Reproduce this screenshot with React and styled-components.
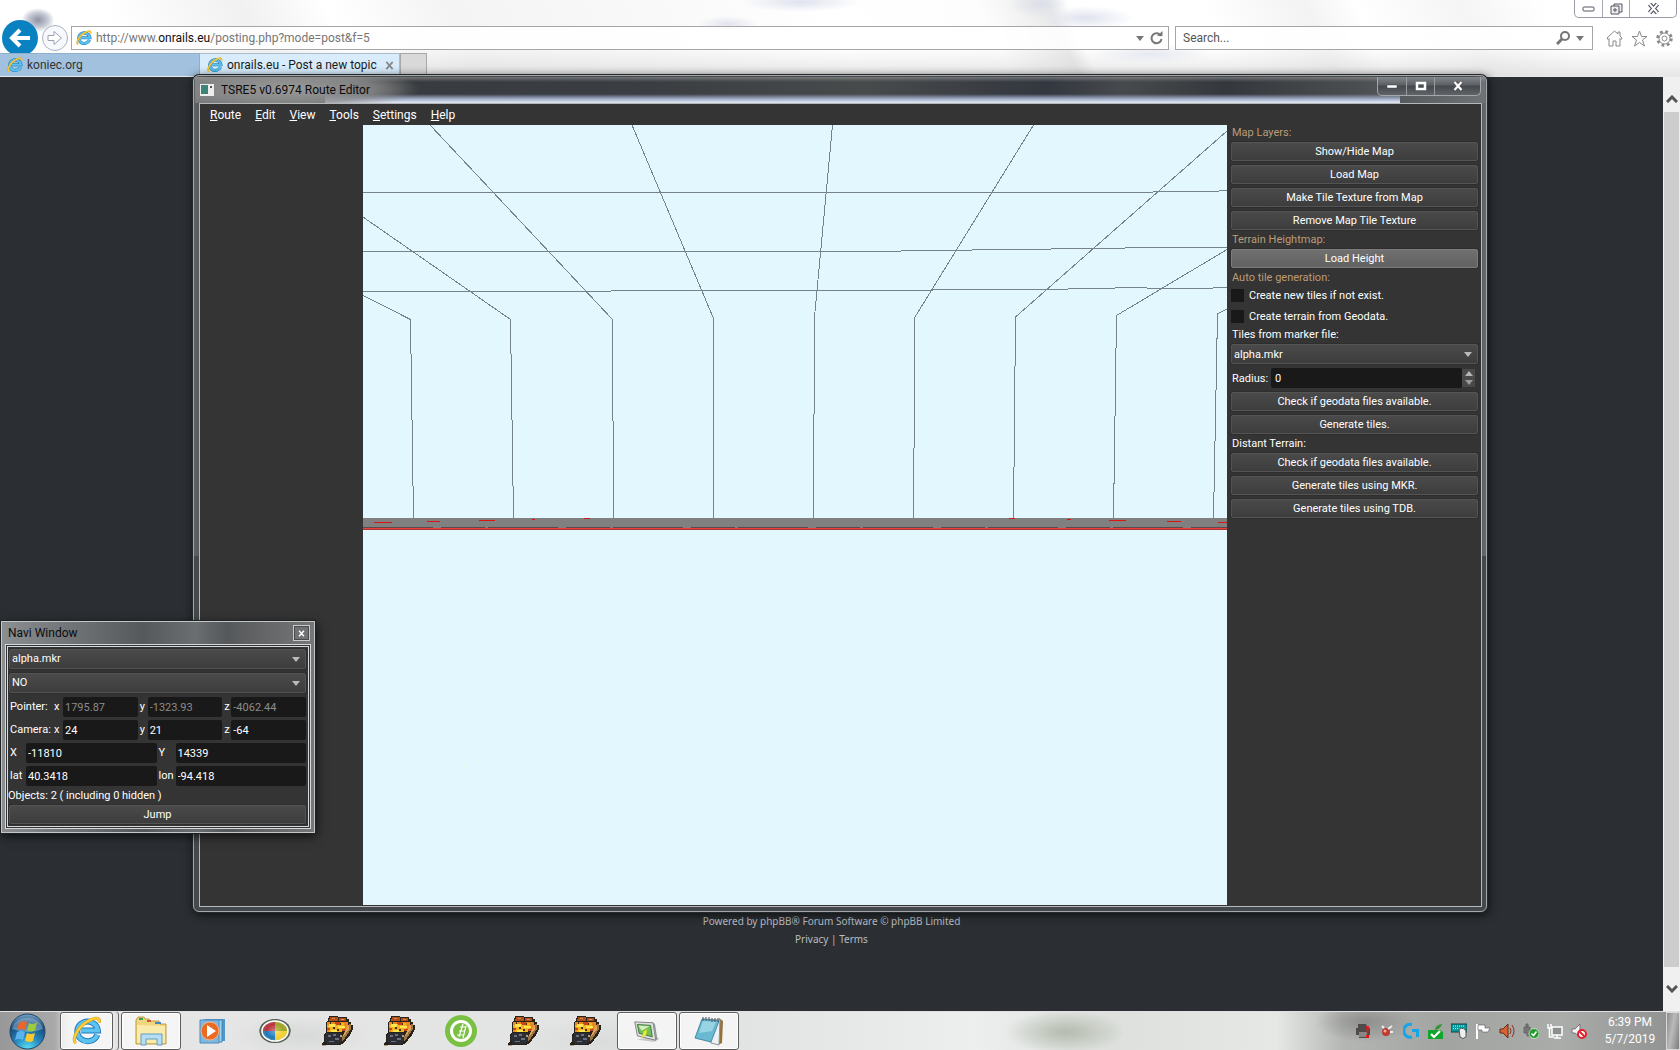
import React from 'react';
import styled, { createGlobalStyle, css } from 'styled-components';

const GlobalStyle = createGlobalStyle`
  *, *::before, *::after { box-sizing: border-box; }
  html, body, #root { height: 100%; margin: 0; }
  body { overflow: hidden; background: #2b2f33; }
  button, input, select { font: inherit; color: inherit; margin: 0; padding: 0; border: 0; border-radius: 0; background: none; outline: 0; }
  svg { display: block; flex: none; }
`;

const ui = "Roboto, 'Open Sans', sans-serif";
const web = "'Noto Sans', 'Open Sans', sans-serif";
const widget = "Roboto, 'Noto Sans', sans-serif";

/* ---------- desktop and browser ---------- */

const Desktop = styled.div`
  position: relative;
  display: flex;
  flex-direction: column;
  height: 100vh;
  overflow: hidden;
  font: 12px/16px ${ui};
`;

const BrowserTop = styled.header`
  display: flex;
  flex-direction: column;
  height: 77px;
  flex: none;
  border-bottom: 1px solid #e8e8e8;
  background:
    radial-gradient(22px 16px at 38px 20px, #8d93a4 0, rgba(160, 165, 185, 0.6) 45%, transparent 75%),
    radial-gradient(60px 10px at 800px 2px, #dfe2ee, transparent),
    radial-gradient(30px 8px at 728px 24px, #e2e4ee, transparent),
    radial-gradient(30px 14px at 1040px 4px, #dcdfe8, transparent),
    radial-gradient(50px 12px at 1085px 18px, #dfe3ee, transparent),
    radial-gradient(60px 10px at 1150px 54px, #e6e9f1, transparent),
    linear-gradient(180deg, transparent 48px, rgba(205, 205, 205, 0.5) 77px),
    linear-gradient(65deg, #fff 8%, #f1f1f1 16%, #fff 21%, #f4f4f4 28%, #fafafa 42%, #fff 50%, #fdfdfd 59%, #e9e9e9 63%, #fff 64%, #fff 72%, #f3f3f3 78%, #fff 81%, #f5f5f5 87%, #fff 92%);
`;

const CaptionRow = styled.div`
  display: flex;
  flex: none;
  justify-content: flex-end;
  height: 26px;
  padding-right: 3px;
`;

const CaptionGroup = styled.div`
  display: flex;
  height: 18px;
  border: 1px solid #9a9aa4;
  border-top: 0;
  border-radius: 0 0 5px 5px;
  background: rgba(255, 255, 255, 0.7);
`;

const CaptionButton = styled.button`
  display: grid;
  place-items: center;
  width: ${(p) => (p.$wide ? 47 : 27)}px;
  & + & { border-left: 1px solid #a8a8b0; }
`;

const NavRow = styled.div`
  display: flex;
  flex: none;
  align-items: center;
  height: 24px;
  padding: 0 7px 0 2px;
`;

const BackButton = styled.button`
  display: grid;
  place-items: center;
  width: 36px;
  height: 36px;
  border-radius: 50%;
  background: #0a82c2;
`;

const ForwardButton = styled.button`
  display: grid;
  place-items: center;
  width: 26px;
  height: 26px;
  margin: 0 3px 0 4px;
  border: 1px solid #a9b3c4;
  border-radius: 50%;
  background: rgba(245, 247, 252, 0.7);
`;

const AddressBox = styled.div`
  display: flex;
  align-items: center;
  gap: 4px;
  flex: 1;
  height: 24px;
  padding: 0 2px 0 4px;
  border: 1px solid #a6a6a8;
  background: rgba(255, 255, 255, 0.85);
`;

const AddressText = styled.a`
  flex: 1;
  color: #767676;
  text-decoration: none;
  b { font-weight: 400; color: #111; }
`;

const SearchBox = styled.label`
  display: flex;
  align-items: center;
  gap: 5px;
  width: 418px;
  height: 24px;
  margin-left: 6px;
  padding: 0 8px 0 7px;
  border: 1px solid #a6a6a8;
  background: rgba(255, 255, 255, 0.85);
  input { flex: 1; min-width: 0; color: #555; }
  input::placeholder { color: #555; opacity: 1; }
`;

const PlainButton = styled.button`
  display: grid;
  place-items: center;
`;

const ToolIcons = styled.div`
  display: flex;
  gap: 8px;
  margin-left: 13px;
`;

const TabRow = styled.div`
  display: flex;
  flex: 1;
  min-height: 0;
  margin-top: 3px;
`;

const Tab = styled.div`
  display: flex;
  align-items: center;
  gap: 4px;
  width: 200px;
  padding-left: 7px;
  border: 1px solid ${(p) => (p.$active ? '#a9bccb' : '#8fb0cc')};
  border-width: 1px 1px 0 0;
  color: ${(p) => (p.$active ? '#1a1a1a' : '#333')};
  background: ${(p) => (p.$active ? '#d8ecfb' : '#a1c1de')};
  white-space: nowrap;
  button { margin: 0 5px 0 auto; }
`;

const NewTab = styled.button`
  width: 27px;
  border: 1px solid #a8a8a8;
  border-bottom: 0;
  background: #d9d9d9;
`;

const PageArea = styled.div`
  display: flex;
  flex: 1;
  min-height: 0;
  background: #2b2f33;
`;

const PageBody = styled.main`
  display: flex;
  flex-direction: column;
  justify-content: flex-end;
  align-items: center;
  flex: 1;
  padding-bottom: 63px;
  color: #b9bdc2;
  font: 10px/18px ${web};
  a { color: inherit; text-decoration: none; }
`;

const ScrollTrack = styled.div`
  display: flex;
  flex-direction: column;
  align-items: center;
  width: 17px;
  padding-top: 9px;
  background: #f0f0f0;
`;

const ScrollButton = styled.button`
  display: grid;
  place-items: center;
  width: 17px;
  height: ${(p) => p.$size}px;
`;

const ScrollThumb = styled.div`
  width: 15px;
  flex: 1;
  background: #cdcdcd;
`;

/* ---------- shared widgets ---------- */

const face = css`
  border: 1px solid #545454;
  border-radius: 2px;
  background: linear-gradient(#4a4a4a, #3d3d3d);
  box-shadow: 0 0 0 1px #2e2e2e;
`;

const PushButton = styled.button`
  ${face}
  width: 100%;
  height: 19px;
  color: #fff;
  line-height: 17px;
  text-align: center;
  ${(p) => p.$hot && css`background: linear-gradient(#707070, #616161); border-color: #7c7c7c;`}
`;

const SelectWrap = styled.span`
  position: relative;
  display: block;
  &::after {
    content: '';
    position: absolute;
    right: 6px;
    top: 8px;
    border: 4px solid transparent;
    border-top: 5px solid #b9b9b9;
    border-bottom: 0;
    pointer-events: none;
  }
  select {
    ${face}
    display: block;
    width: 100%;
    height: 20px;
    padding: 0 2px;
    color: #fff;
    appearance: none;
  }
`;

const Field = styled.input`
  width: 100%;
  min-width: 0;
  height: 20px;
  padding: 0 2px;
  border-radius: 2px;
  background: #191919;
  color: ${(p) => (p.readOnly ? '#8c8c8c' : '#fff')};
  appearance: textfield;
  &::-webkit-inner-spin-button { display: none; }
`;

/* ---------- route editor window ---------- */

const EditorWindow = styled.section`
  position: absolute;
  inset: 75px 193px 138px;
  display: flex;
  flex-direction: column;
  padding: 1px 4px 4px 5px;
  border: 1px solid #a4a8aa;
  border-radius: 6px;
  background:
    linear-gradient(90deg, #606366, transparent 1%, transparent 99%, #686b6e) 0 0 / 100% 480px no-repeat,
    #44494d;
  box-shadow: 0 0 0 1px #25282a, 1px 2px 10px 1px rgba(0, 0, 0, 0.65);
`;

const TitleBar = styled.div`
  display: flex;
  align-items: flex-start;
  height: 26px;
  margin: 0 -3px 0 -4px;
  padding-right: 4px;
  background:
    radial-gradient(130px 22px at 95px 12px, rgba(160, 160, 160, 0.9), rgba(140, 140, 140, 0.75) 65%, transparent),
    linear-gradient(180deg, transparent 17px, #8f9bb5 21px, #c6cfe2 24px, #e2e7f1 26px) 130px 0 / calc(100% - 215px) 100% no-repeat,
    linear-gradient(180deg, rgba(170, 170, 170, 0.5), transparent 5px),
    linear-gradient(90deg, #77797b, #55585b 12%, #383b3f 17%, #3a3e42 35%, #474b4c 52%, #33373f 66%, #474a4d 72%, #34383c 80%, #4b4e51 90%, #707376);
`;

const TitleText = styled.h1`
  display: flex;
  align-items: center;
  gap: 7px;
  flex: 1;
  height: 26px;
  margin: 0;
  padding-left: 5px;
  color: #0b0b0b;
  font: 12px/16px ${ui};
`;

const EditorControls = styled.div`
  display: flex;
  height: 19px;
  border: 1px solid #a4a7aa;
  border-top: 0;
  border-radius: 0 0 5px 5px;
  background: linear-gradient(#83868a, #5b5f63 45%, #45494d 50%, #606468);
  button { width: 28px; }
  button:last-child { width: 46px; }
  button + button { border-left: 1px solid #9a9da0; }
`;

const Client = styled.div`
  display: flex;
  flex-direction: column;
  flex: 1;
  min-height: 0;
  border: 1px solid #b4b8ba;
  background: #343434;
  color: #fff;
`;

const MenuBar = styled.nav`
  display: flex;
  align-items: center;
  gap: 14px;
  height: 21px;
  padding: 0 10px;
  font: 12px/16px ${ui};
`;

const Workspace = styled.div`
  display: grid;
  grid-template-columns: 163px minmax(0, 1fr) 254px;
  flex: 1;
  min-height: 0;
  padding-bottom: 1px;
`;

const Viewport = styled.div`
  grid-column: 2;
  min-height: 0;
  background: #e3f7ff;
  svg { width: 100%; height: 100%; }
`;

const ToolPanel = styled.aside`
  display: flex;
  flex-direction: column;
  gap: 4px;
  padding: 2px 3px 0 4px;
  font: 11px/11px ${widget};
`;

const PanelLabel = styled.div`
  height: 11px;
  padding-left: 1px;
  color: ${(p) => (p.$accent ? '#bb9c78' : '#fff')};
  white-space: nowrap;
`;

const CheckRow = styled.label`
  display: flex;
  align-items: center;
  gap: 5px;
  height: 17px;
  input { appearance: none; width: 13px; height: 13px; background: #191919; }
  input:checked { background: #bb9c78; }
`;

const SpinRow = styled.div`
  display: flex;
  height: 20px;
  align-items: center;
  padding: 0 3px 0 1px;
  label { width: 39px; }
  ${Field} { flex: 1; padding-left: 4px; }
`;

const SpinButtons = styled.div`
  display: grid;
  grid-template-rows: 1fr 1fr;
  width: 13px;
  height: 18px;
  background: #494949;
`;

/* ---------- navi window ---------- */

const NaviWindow = styled.section`
  position: absolute;
  left: 1px;
  top: 621px;
  width: 314px;
  padding: 0 3px 3px;
  border: 1px solid #c3c6c8;
  background: linear-gradient(90deg, #8b8e90, #55595c 45%, #6a6e70 62%, #55585a 72%, #777 100%);
  box-shadow: 0 0 0 1px #1e2022, 1px 3px 10px rgba(0, 0, 0, 0.75);
  color: #fff;
`;

const NaviTitle = styled.div`
  display: flex;
  align-items: center;
  justify-content: space-between;
  height: 22px;
  padding: 0 1px 0 3px;
  h2 { margin: 0; color: #0b0b0b; font: 12px/16px ${ui}; }
`;

const NaviClose = styled.button`
  display: grid;
  place-items: center;
  width: 17px;
  height: 16px;
  border: 1px solid #c9c9c9;
  background: #707274;
  box-shadow: inset 0 0 0 1px #4a4c4e;
`;

const NaviBody = styled.div`
  display: flex;
  flex-direction: column;
  gap: 3px;
  padding: 2px 2px 2px 1px;
  border: 3px double #d5d8da;
  background: #343434;
  font: 11px/12px ${widget};
`;

const NaviSelects = styled.div`
  display: grid;
  gap: 4px;
  padding-bottom: 1px;
`;

const TripleRow = styled.div`
  display: grid;
  grid-template-columns: 44px 9px minmax(0, 1fr) 10px minmax(0, 1fr) 9px minmax(0, 1fr);
  align-items: center;
  padding-left: 1px;
  & > :nth-child(4), & > :nth-child(6) { padding-left: 2px; }
`;

const PairRow = styled.div`
  display: grid;
  grid-template-columns: 16px minmax(0, 1fr) 19px minmax(0, 1fr);
  align-items: center;
  padding-left: 1px;
  & > :nth-child(3) { padding-left: 2px; }
`;

const ObjectCount = styled.p`
  margin: 1px 0 0 -1px;
`;

/* ---------- taskbar ---------- */

const Taskbar = styled.footer`
  display: flex;
  align-items: center;
  height: 39px;
  flex: none;
  border-top: 1px solid #dfe0df;
  background:
    radial-gradient(60px 22px at 1065px 20px, rgba(150, 158, 138, 0.6), transparent),
    radial-gradient(50px 20px at 1365px 10px, rgba(120, 120, 118, 0.6), transparent),
    radial-gradient(90px 24px at 600px 30px, rgba(215, 216, 216, 0.7), transparent),
    radial-gradient(70px 20px at 300px 24px, rgba(212, 213, 213, 0.8), transparent),
    linear-gradient(90deg, #989898, #a9a9a9 55px, #e6e6e6 70px, #e2e3e3 44%, #ecefee 58%, #dde0dd 66%, #e6e8e6 76%, #b4b6b4 80%, #a2a4a2 86%, #aaacaa 93%, #8f9191);
`;

const StartButton = styled.button`
  width: 60px;
  padding-left: 9px;
`;

const TaskButton = styled.button`
  display: grid;
  place-items: center;
  width: 60px;
  height: 38px;
  margin-right: 2px;
  ${(p) => p.$open && css`
    border: 1px solid #5d5d5d;
    border-radius: 3px;
    background: rgba(250, 250, 250, 0.75);
    box-shadow: inset 0 0 0 1px #fff;
  `}
`;

const StackButton = styled(TaskButton)`
  width: 53px;
  margin-right: 8px;
  box-shadow: inset 0 0 0 1px #fff, 2px 0 0 #e8e8e8, 5px 0 0 #e2e2e2, 6px 0 0 #6c6c6c;
`;

const Tray = styled.div`
  display: flex;
  align-items: center;
  gap: 8px;
  margin-left: auto;
  svg { width: 16px; height: 16px; }
`;

const Clock = styled.time`
  width: 79px;
  padding-left: 7px;
  color: #fff;
  font: 12px/17px ${ui};
  text-align: center;
`;

const ShowDesktop = styled.button`
  width: 14px;
  height: 38px;
  border: 1px solid #d8d8d8;
  background: linear-gradient(100deg, #8b8b8b, #bababa 45%, #7c7c7c);
`;

/* ---------- drawings ---------- */

const IELogo = ({ size }) => (
  <svg width={size} height={size} viewBox="0 0 32 32" aria-hidden="true">
    <path d="M27 20a11 10.500 0 1 1 .6-4.500H10" fill="none" stroke="#1b78bd" strokeWidth="6.400" />
    <path d="M27 20a11 10.500 0 1 1 .6-4.500H10" fill="none" stroke="#5cc3f0" strokeWidth="4.400" />
    <path d="M4 29C-1 24 8 9 20 4c6-2.500 10-2 9 3" fill="none" stroke="#d99a10" strokeWidth="3.400" />
    <path d="M4 29C-1 24 8 9 20 4c6-2.500 10-2 9 3" fill="none" stroke="#fbd03c" strokeWidth="2.200" />
  </svg>
);

const Caret = ({ color = '#777', up }) => (
  <svg width="8" height="5" viewBox="0 0 8 5" aria-hidden="true">
    <path d={up ? 'M0 5h8L4 0z' : 'M0 0h8L4 5z'} fill={color} />
  </svg>
);

const Cross = ({ size = 10, color = '#888', edge }) => (
  <svg width={size} height={size} viewBox="0 0 10 10" aria-hidden="true">
    {edge && <path d="M1.500 1l7 8M8.500 1l-7 8" stroke={edge} strokeWidth="4" />}
    <path d="M1.500 1l7 8M8.500 1l-7 8" stroke={color} strokeWidth="2" />
  </svg>
);

const Train = () => (
  <svg width="32" height="32" viewBox="0 0 32 32" shapeRendering="crispEdges" aria-hidden="true">
    <path d="M8 1h9v1h9v2h2v3h2v3h2v4l-3 6-4 5-3 4-5 1H6l-3 1H1v-2l2-3V19l2-2V8l2-3z" fill="#27231c" />
    <path d="M9 2h8v4H8zM18 3h7v3h-7z" fill="#b1501f" />
    <path d="M11 3h3v1h-3zM20 4h3v1h-3z" fill="#e0894a" />
    <path d="M6 7h21v3l-2 4-5 3H6z" fill="#e88a1d" />
    <path d="M6 10h8V8h9v6l-3 3H8z" fill="#f6b320" />
    <path d="M8 9h6v3H8zM17 11h7v2h-7zM10 15h6v2h-6z" fill="#ffe650" />
    <path d="M14 7h5v3h-4zM6 13h3v2H6zM21 14h4v2h-4z" fill="#c8451a" />
    <path d="M12 12h2v2h-2zM16 14h2v2h-2zM19 8h1v2h-1zM9 7h1v2H9z" fill="#4b2d14" />
    <path d="M28 9h2v5l-8 12h-3z" fill="#9b7442" />
    <path d="M27 10h1v4l-5 7h-1z" fill="#e5a756" />
    <path d="M5 18h16v7l-4 4H6l-2-4z" fill="#2c2e35" />
    <path d="M7 20h3v2H7zM12 19h3v2h-3zM14 23h4v2h-4zM8 26h5v1H8z" fill="#6d7180" />
    <path d="M1 30h4v1H1zM19 20h2v2h-2z" fill="#b3a385" />
  </svg>
);

const StartOrb = () => (
  <svg width="37" height="37" viewBox="0 0 37 37" aria-hidden="true">
    <defs>
      <radialGradient id="orb" cx=".5" cy="1" r="1">
        <stop offset="0" stopColor="#5ae3f7" />
        <stop offset=".4" stopColor="#2585bb" />
        <stop offset=".75" stopColor="#174a79" />
        <stop offset="1" stopColor="#7ba7c7" />
      </radialGradient>
    </defs>
    <circle cx="18.500" cy="18.500" r="17.500" fill="url(#orb)" stroke="#1d4568" />
    <path d="M3 16a16 15 0 0 1 31 0q-15 6-31 0" fill="#d5e9f5" opacity=".35" />
    <path d="M10 10q4-3 8-1l-2 8q-4-2-8 0z" fill="#ee6529" />
    <path d="M20 10q4 2 8-.500l-2 8q-4 2-8 0z" fill="#9ccb3b" />
    <path d="M8 19q4-2 8 0l-2 8q-4-2-8 0z" fill="#5ab2ee" />
    <path d="M18 20q4 2 8 0l-2 8q-4 2-8-.500z" fill="#fdc82f" />
  </svg>
);

const ExplorerIcon = () => (
  <svg width="32" height="30" viewBox="0 0 32 30" aria-hidden="true">
    <path d="M1 4l2-3h6l1 2h4l1 2h9l1 3h6v20H1z" fill="#f0d67f" stroke="#bf9b43" />
    <path d="M4 2h4v2H4z" fill="#2f9e58" />
    <path d="M12 4h4v2h-4z" fill="#d45237" />
    <path d="M20 6h6v2h-6z" fill="#4189c9" />
    <path d="M2 9l28 1v17H2z" fill="#f9ebab" />
    <path d="M6 29V18h21v11h-5v-6H11v6z" fill="#b5def4" stroke="#629cc7" />
  </svg>
);

const MediaIcon = () => (
  <svg width="28" height="28" viewBox="0 0 28 28" aria-hidden="true">
    <path d="M6 2h20v22H6z" fill="#4e98ca" />
    <path d="M4 3h19v22H4z" fill="#a5d3ee" stroke="#4383b3" />
    <path d="M1 3h19v23H1z" fill="#7fb9e0" stroke="#4a8abc" />
    <circle cx="11" cy="14" r="9" fill="#ec6b22" stroke="#f7b384" />
    <path d="M8 8l9 6-9 6z" fill="#fff" />
  </svg>
);

const OvalIcon = () => (
  <svg width="32" height="26" viewBox="0 0 32 26" aria-hidden="true">
    <defs>
      <radialGradient id="gloss">
        <stop offset="0" stopColor="#fff" stopOpacity=".35" />
        <stop offset=".6" stopColor="#fff" stopOpacity="0" />
        <stop offset="1" stopColor="#1b2a20" stopOpacity=".55" />
      </radialGradient>
    </defs>
    <ellipse cx="16" cy="13" rx="15.500" ry="12" fill="#6f7b66" />
    <path d="M16 13V3A13 10 0 0 0 3 13z" fill="#b8323b" />
    <path d="M16 13V3a13 10 0 0 1 13 10z" fill="#9da51f" />
    <path d="M16 13v10A13 10 0 0 1 3 13z" fill="#1b78ba" />
    <path d="M16 13v10a13 10 0 0 0 13-10z" fill="#f4cf30" />
    <ellipse cx="16" cy="13" rx="15.500" ry="12" fill="url(#gloss)" />
    <ellipse cx="16" cy="13" rx="13" ry="10" fill="none" stroke="#fff" strokeWidth="1.500" />
  </svg>
);

const GreenRing = () => (
  <svg width="32" height="32" viewBox="0 0 32 32" aria-hidden="true">
    <circle cx="16" cy="16" r="16" fill="#79c043" />
    <circle cx="16" cy="16" r="9.500" fill="none" stroke="#fff" strokeWidth="3" />
    <path d="M14 22l4-13M18 23l3-12M15 12h6M14 16h6M12 20h6" stroke="#fff" strokeWidth="1.200" />
  </svg>
);

const PhotoIcon = () => (
  <svg width="28" height="25" viewBox="0 0 32 28" aria-hidden="true">
    <path d="M4 23l20 3 6-4-5-2z" fill="#aaa" opacity=".6" />
    <path d="M2 3l21 1 3 20-21-5z" fill="#dce0df" stroke="#777" />
    <path d="M23 4l2 1 3 18-2 1z" fill="#92979a" />
    <path d="M5 6l15 1 2 13-15-4z" fill="#71bf56" stroke="#356e36" />
    <path d="M6 7l13 1-9 5z" fill="#d6edbc" />
    <path d="M19 10l-3 2-1 6-5 3 2-7z" fill="#f1e629" />
  </svg>
);

const NotepadIcon = () => (
  <svg width="32" height="30" viewBox="0 0 32 30" aria-hidden="true">
    <path d="M26 2l4 3-1 22-4 2z" fill="#95713a" />
    <path d="M10 3l17 1-1 25-8-2z" fill="#edf1f3" stroke="#8b9399" />
    <path d="M9 3l17 2-8 21-16-4z" fill="#6ab9d2" stroke="#4789a5" />
    <path d="M10 5l13 1-4 9-13 2z" fill="#addfea" opacity=".7" />
    <path d="M10 1v4M13 1v4M16 1v4M19 2v4M22 2v4M25 2v4" stroke="#4c565d" />
  </svg>
);

const trayIcons = [
  ['Printer', <><path d="M3 1h8l2 4h2v7h-3v3H4v-3H1V5h2z" fill="#504b49" /><path d="M4 9h8v5H4z" fill="#8c8482" /><path d="M11 3h3l-1 8h-1zM11 12h3v3h-3z" fill="#e4161b" /></>],
  ['Pointer device', <><circle cx="7" cy="9" r="4" fill="#bd3a31" /><path d="M5 5l-2-2M9 6l4-3M11 9h3" stroke="#eee" strokeWidth="2" /><circle cx="6" cy="8" r="1.500" fill="#f0a79c" /></>],
  ['Gaming software', <path d="M9 1.500A6.500 6.500 0 1 0 9 14M9 7.500h5.500V14" fill="none" stroke="#16a5e8" strokeWidth="3" />],
  ['Backup', <><path d="M1 7h12l3 2v7H1z" fill="#12a52b" /><path d="M8 7q0-5 7-6-1 5-7 6" fill="#3b9338" /><path d="M4 11l3 3 6-6" fill="none" stroke="#fff" strokeWidth="2.200" /></>],
  ['Keyboard and mouse', <><path d="M0 1h16v8H0z" fill="#089c9e" stroke="#123c42" /><path d="M2 3h12M2 5.500h12" stroke="#b6fdfb" strokeDasharray="1 1" /><path d="M8 6q5-2 7 2v6q-3 3-6 0z" fill="#eee" stroke="#555" /></>],
  ['Action center', <><path d="M2 1v15" stroke="#fff" strokeWidth="2" /><path d="M3 2h7v3h5l-2 4H7V7H3z" fill="#fff" stroke="#555" strokeWidth=".6" /></>],
  ['Speaker', <><path d="M1 6h3l5-5v14l-5-5H1z" fill="#d66432" stroke="#6c2811" /><path d="M11 5q2 3 0 6M13 2q4 6 0 12" fill="none" stroke="#8c351a" /></>],
  ['Safely remove hardware', <><path d="M1 4h6v6H1zM3 1h2v3H3zM4 10v3h5" fill="#777" stroke="#666" /><circle cx="11" cy="10.500" r="5" fill="#249d2c" stroke="#fff" strokeWidth=".6" /><path d="M8.500 10.500l2 2 3-4" fill="none" stroke="#fff" strokeWidth="1.500" /></>],
  ['Network', <><path d="M5 4h10v8H5z" fill="#89908f" stroke="#fff" strokeWidth="1.500" /><path d="M7 15h7M10 12v3M1 1v4h3V1M2.500 5v9H7" fill="none" stroke="#fff" strokeWidth="1.500" /></>],
  ['Sound muted', <><path d="M1 6h3l5-5v13l-5-4H1z" fill="#f6f6f6" stroke="#777" /><circle cx="11" cy="11" r="4" fill="#fff" stroke="#e0222d" strokeWidth="2" /><path d="M8.500 8.500l5 5" stroke="#e0222d" strokeWidth="2" /></>],
];

const gridLines = [
  'M0 170.500L47.500 194.500 50.500 393', 'M0 92L147.500 194.500 150.500 393', 'M67 0L249.500 194.500 250.500 393',
  'M269 0L350.500 193.500V393', 'M469.500 0L451.500 192 450.500 393', 'M670.500 0L552 192 550.500 393',
  'M864 6L652.500 192 650.500 393', 'M864 124.500L753.500 190.500 750.500 393', 'M864 184L854.500 189 850.500 393',
  'M0 67.500H790M790 66.500H856M856 65.500H864',
  'M0 126.500H538M538 125.500H609M609 124.500H688M688 123.500H762M762 122.500H864',
  'M0 166.500H248M248 165.500H570M570 164.500H705M705 163.500H752M752 162.500H784M784 163.500H850M850 162.500H864',
];

const redMarks = 'M11 397.500h18M64 396.500h13M116 395.500h16M169 394.500h3M221 393.500h6M646 393.500h6M704 394.500h4M746 395.500h17M804 396.500h14M855 397.500h9';

const Terrain = () => (
  <svg viewBox="0 0 864 780" preserveAspectRatio="none" shapeRendering="crispEdges" role="img" aria-label="Terrain view">
    <path d={gridLines.join('')} fill="none" stroke="#76838a" />
    <path d="M0 393h864v12H0z" fill="#808080" />
    <path d="M0 402.500h864" stroke="#5c4a4a" strokeDasharray="70 8 44 3" />
    <path d="M0 403.500h864" stroke="#f03c3c" />
    <path d="M0 404.500h864" stroke="#a03a3a" />
    <path d={redMarks} stroke="#dc1414" />
    <path d="M101 640.500h1" stroke="#f2f5a8" />
  </svg>
);

/* ---------- composition ---------- */

const MenuItem = ({ name }) => (
  <button type="button"><u>{name[0]}</u>{name.slice(1)}</button>
);

const Select = ({ label, value }) => (
  <SelectWrap><select aria-label={label} defaultValue={value}><option>{value}</option></select></SelectWrap>
);

const Coordinates = ({ title, values, readOnly }) => (
  <TripleRow>
    <span>{title}:</span>
    {['x', 'y', 'z'].map((axis, i) => {
      const id = `${title}-${axis}`;
      return (
        <React.Fragment key={axis}>
          <label htmlFor={id}>{axis}</label>
          <Field id={id} defaultValue={values[i]} readOnly={readOnly} />
        </React.Fragment>
      );
    })}
  </TripleRow>
);

const Pair = ({ entries }) => (
  <PairRow>
    {entries.map(([name, value]) => (
      <React.Fragment key={name}>
        <label htmlFor={`tile-${name}`}>{name}</label>
        <Field id={`tile-${name}`} defaultValue={value} />
      </React.Fragment>
    ))}
  </PairRow>
);

const Browser = () => (
  <>
    <BrowserTop>
      <CaptionRow>
        <CaptionGroup>
          <CaptionButton aria-label="Minimize"><svg width="13" height="6"><rect x="1" y="1" width="11" height="4" rx="1" fill="#fff" stroke="#555566" /></svg></CaptionButton>
          <CaptionButton aria-label="Restore"><svg width="13" height="12" fill="#eee" stroke="#555566"><path d="M4 1h8v8H4z" /><path d="M1 3h8v8H1zM4 6h2v2H4z" /></svg></CaptionButton>
          <CaptionButton $wide aria-label="Close"><Cross size={11} color="#fff" edge="#555566" /></CaptionButton>
        </CaptionGroup>
      </CaptionRow>
      <NavRow>
        <BackButton aria-label="Back"><svg width="22" height="20" viewBox="0 0 22 20"><path d="M11 2L3 10l8 8M3 10h18" fill="none" stroke="#fff" strokeWidth="4" /></svg></BackButton>
        <ForwardButton aria-label="Forward"><svg width="16" height="16" viewBox="0 0 16 16"><path d="M1 5.500h6V1.500L14.500 8 7 14.500v-4H1z" fill="#fff" stroke="#9aa2b1" /></svg></ForwardButton>
        <AddressBox>
          <IELogo size={16} />
          <AddressText href="#address">http://www.<b>onrails.eu</b>/posting.php?mode=post&amp;f=5</AddressText>
          <PlainButton aria-label="Address history"><Caret /></PlainButton>
          <PlainButton aria-label="Refresh"><svg width="18" height="14" viewBox="0 0 18 14"><path d="M13 5a5 5 0 1 0 .5 3" fill="none" stroke="#777" strokeWidth="2" /><path d="M9 5h5.500V0z" fill="#777" /></svg></PlainButton>
        </AddressBox>
        <SearchBox>
          <input aria-label="Search" placeholder="Search..." />
          <PlainButton aria-label="Go"><svg width="15" height="14" viewBox="0 0 15 14"><circle cx="9" cy="5" r="4" fill="none" stroke="#777" strokeWidth="2" /><path d="M6 8l-5 5" stroke="#777" strokeWidth="3" /></svg></PlainButton>
          <PlainButton aria-label="Search options"><Caret /></PlainButton>
        </SearchBox>
        <ToolIcons>
          <PlainButton aria-label="Home"><svg width="17" height="17" viewBox="0 0 17 17"><path d="M1 8l7.500-7L12 4V2h2v4l2 2-1 1.500-1-1V16h-4v-5H7v5H3V8.500l-1 1z" fill="#fff" stroke="#8a8a8a" /></svg></PlainButton>
          <PlainButton aria-label="Favorites"><svg width="17" height="17" viewBox="0 0 17 17"><path d="M8.500 1l2 5.500H16l-4.500 3.500L13.500 16l-5-3.500-5 3.500 2-6L1 6.500h5.500z" fill="#fff" stroke="#8a8a8a" /></svg></PlainButton>
          <PlainButton aria-label="Tools"><svg width="17" height="17" viewBox="0 0 17 17"><circle cx="8.500" cy="8.500" r="6.500" fill="none" stroke="#8a8a8a" strokeWidth="3.500" strokeDasharray="2.600 2.500" /><circle cx="8.500" cy="8.500" r="5.500" fill="#fff" stroke="#8a8a8a" /><circle cx="8.500" cy="8.500" r="2.500" fill="#fff" stroke="#8a8a8a" /></svg></PlainButton>
        </ToolIcons>
      </NavRow>
      <TabRow>
        <Tab><IELogo size={16} />koniec.org</Tab>
        <Tab $active><IELogo size={16} />onrails.eu - Post a new topic<PlainButton aria-label="Close tab"><Cross size={9} /></PlainButton></Tab>
        <NewTab aria-label="New tab" />
      </TabRow>
    </BrowserTop>
    <PageArea>
      <PageBody>
        <div>Powered by <a href="#phpbb">phpBB</a>® Forum Software © phpBB Limited</div>
        <div><a href="#privacy">Privacy</a> | <a href="#terms">Terms</a></div>
      </PageBody>
      <ScrollTrack>
        <ScrollButton $size={26} aria-label="Scroll up"><svg width="12" height="8"><path d="M1 7l5-5 5 5" fill="none" stroke="#555" strokeWidth="3" /></svg></ScrollButton>
        <ScrollThumb />
        <ScrollButton $size={44} aria-label="Scroll down"><svg width="12" height="8"><path d="M1 1l5 5 5-5" fill="none" stroke="#555" strokeWidth="3" /></svg></ScrollButton>
      </ScrollTrack>
    </PageArea>
  </>
);

const Editor = () => (
  <EditorWindow>
    <TitleBar>
      <TitleText>
        <svg width="14" height="12"><path d="M0 0h14v12H0z" fill="#eee" /><path d="M1 1h7v9H1z" fill="#3e8278" /><path d="M10 2h2v2h-2z" fill="#555" /></svg>
        TSRE5 v0.6974 Route Editor
      </TitleText>
      <EditorControls>
        <PlainButton aria-label="Minimize"><svg width="12" height="5"><path d="M1 1h10v3H1z" fill="#fff" stroke="#444" strokeWidth=".5" /></svg></PlainButton>
        <PlainButton aria-label="Maximize"><svg width="12" height="10"><path d="M2 2h8v6H2z" fill="none" stroke="#fff" strokeWidth="2.500" /></svg></PlainButton>
        <PlainButton aria-label="Close"><Cross color="#fff" edge="#555" /></PlainButton>
      </EditorControls>
    </TitleBar>
    <Client>
      <MenuBar>
        {['Route', 'Edit', 'View', 'Tools', 'Settings', 'Help'].map((name) => <MenuItem key={name} name={name} />)}
      </MenuBar>
      <Workspace>
        <Viewport><Terrain /></Viewport>
        <ToolPanel>
          <PanelLabel $accent>Map Layers:</PanelLabel>
          <PushButton>Show/Hide Map</PushButton>
          <PushButton>Load Map</PushButton>
          <PushButton>Make Tile Texture from Map</PushButton>
          <PushButton>Remove Map Tile Texture</PushButton>
          <PanelLabel $accent>Terrain Heightmap:</PanelLabel>
          <PushButton $hot>Load Height</PushButton>
          <PanelLabel $accent>Auto tile generation:</PanelLabel>
          <CheckRow><input type="checkbox" />Create new tiles if not exist.</CheckRow>
          <CheckRow><input type="checkbox" />Create terrain from Geodata.</CheckRow>
          <PanelLabel>Tiles from marker file:</PanelLabel>
          <Select label="Tiles from marker file" value="alpha.mkr" />
          <SpinRow>
            <label htmlFor="radius">Radius:</label>
            <Field id="radius" type="number" defaultValue="0" />
            <SpinButtons>
              <PlainButton aria-label="Increase radius"><Caret up color="#b5b5b5" /></PlainButton>
              <PlainButton aria-label="Decrease radius"><Caret color="#999" /></PlainButton>
            </SpinButtons>
          </SpinRow>
          <PushButton>Check if geodata files available.</PushButton>
          <PushButton>Generate tiles.</PushButton>
          <PanelLabel>Distant Terrain:</PanelLabel>
          <PushButton>Check if geodata files available.</PushButton>
          <PushButton>Generate tiles using MKR.</PushButton>
          <PushButton>Generate tiles using TDB.</PushButton>
        </ToolPanel>
      </Workspace>
    </Client>
  </EditorWindow>
);

const Navi = () => (
  <NaviWindow>
    <NaviTitle>
      <h2>Navi Window</h2>
      <NaviClose aria-label="Close"><Cross size={7} color="#fff" /></NaviClose>
    </NaviTitle>
    <NaviBody>
      <NaviSelects>
        <Select label="Marker file" value="alpha.mkr" />
        <Select label="Marker" value="NO" />
      </NaviSelects>
      <Coordinates title="Pointer" values={['1795.87', '-1323.93', '-4062.44']} readOnly />
      <Coordinates title="Camera" values={['24', '21', '-64']} />
      <Pair entries={[['X', '-11810'], ['Y', '14339']]} />
      <Pair entries={[['lat', '40.3418'], ['lon', '-94.418']]} />
      <ObjectCount>Objects: 2 ( including 0 hidden )</ObjectCount>
      <PushButton>Jump</PushButton>
    </NaviBody>
  </NaviWindow>
);

const Bar = () => (
  <Taskbar>
    <StartButton aria-label="Start"><StartOrb /></StartButton>
    <StackButton $open aria-label="Internet Explorer"><IELogo size={30} /></StackButton>
    <TaskButton $open aria-label="Explorer"><ExplorerIcon /></TaskButton>
    <TaskButton aria-label="Media Player"><MediaIcon /></TaskButton>
    <TaskButton aria-label="Color tool"><OvalIcon /></TaskButton>
    <TaskButton aria-label="Train Simulator"><Train /></TaskButton>
    <TaskButton aria-label="Train Editor"><Train /></TaskButton>
    <TaskButton aria-label="Open Rails"><GreenRing /></TaskButton>
    <TaskButton aria-label="Train Routes"><Train /></TaskButton>
    <TaskButton aria-label="Train Activities"><Train /></TaskButton>
    <TaskButton $open aria-label="Route Editor"><PhotoIcon /></TaskButton>
    <TaskButton $open aria-label="Notepad"><NotepadIcon /></TaskButton>
    <Tray>
      {trayIcons.map(([name, art]) => (
        <PlainButton key={name} aria-label={name}><svg viewBox="0 0 16 16">{art}</svg></PlainButton>
      ))}
    </Tray>
    <Clock>6:39 PM<br />5/7/2019</Clock>
    <ShowDesktop aria-label="Show desktop" />
  </Taskbar>
);

export default function App() {
  return (
    <Desktop>
      <GlobalStyle />
      <Browser />
      <Bar />
      <Editor />
      <Navi />
    </Desktop>
  );
}
